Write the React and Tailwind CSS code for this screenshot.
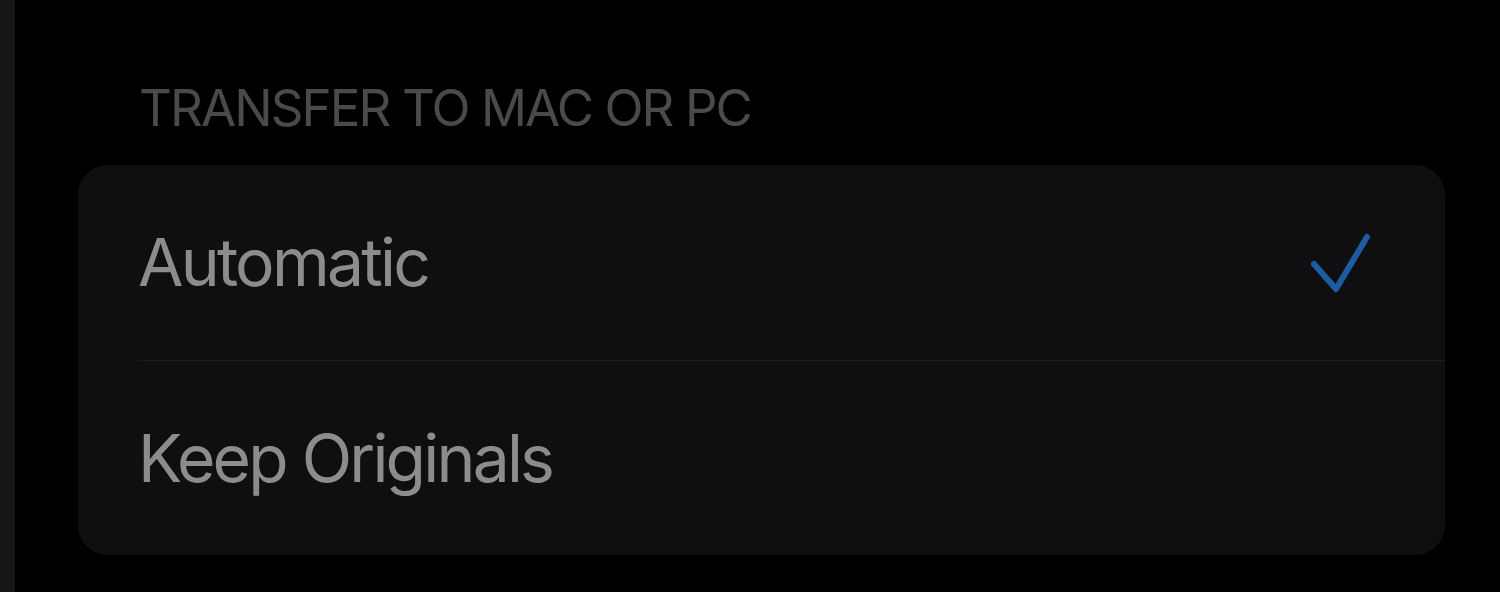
import React from 'react';

function Check() {
  return (
    <svg width="64" height="62" viewBox="0 0 64 62" fill="none">
      <path
        d="M5 32 L27 57 L58 5"
        stroke="#1d5ba3"
        strokeWidth="6"
        strokeLinecap="round"
        strokeLinejoin="round"
      />
    </svg>
  );
}

export default function App() {
  const options = [
    { label: 'Automatic', checked: true },
    { label: 'Keep Originals', checked: false },
  ];

  return (
    <div className="flex h-[592px] w-[1500px] bg-black font-['Inter',sans-serif]">
      {/* left edge of the neighbouring pane */}
      <div className="w-[15px] bg-[#161616]" />

      <div className="flex-1 pt-[78px] pl-[63px] pr-[55px]">
        <h2 className="pl-[61px] text-[51px] leading-[60px] tracking-[-1.9px] text-[#4a4a4c] uppercase">
          Transfer to Mac or PC
        </h2>

        <div className="mt-[27px] overflow-hidden rounded-[30px] bg-[#0f0f11]">
          {options.map((opt, i) => (
            <div key={opt.label} className="pl-[60px]">
              <div
                className={
                  'flex h-[195px] items-center justify-between pr-[72px] ' +
                  (i > 0 ? 'border-t border-[#1c1c1f]' : '')
                }
              >
                <span className="text-[66px] text-[#8c8c8e] tracking-[-2.8px]">{opt.label}</span>
                {opt.checked && <Check />}
              </div>
            </div>
          ))}
        </div>
      </div>
    </div>
  );
}
